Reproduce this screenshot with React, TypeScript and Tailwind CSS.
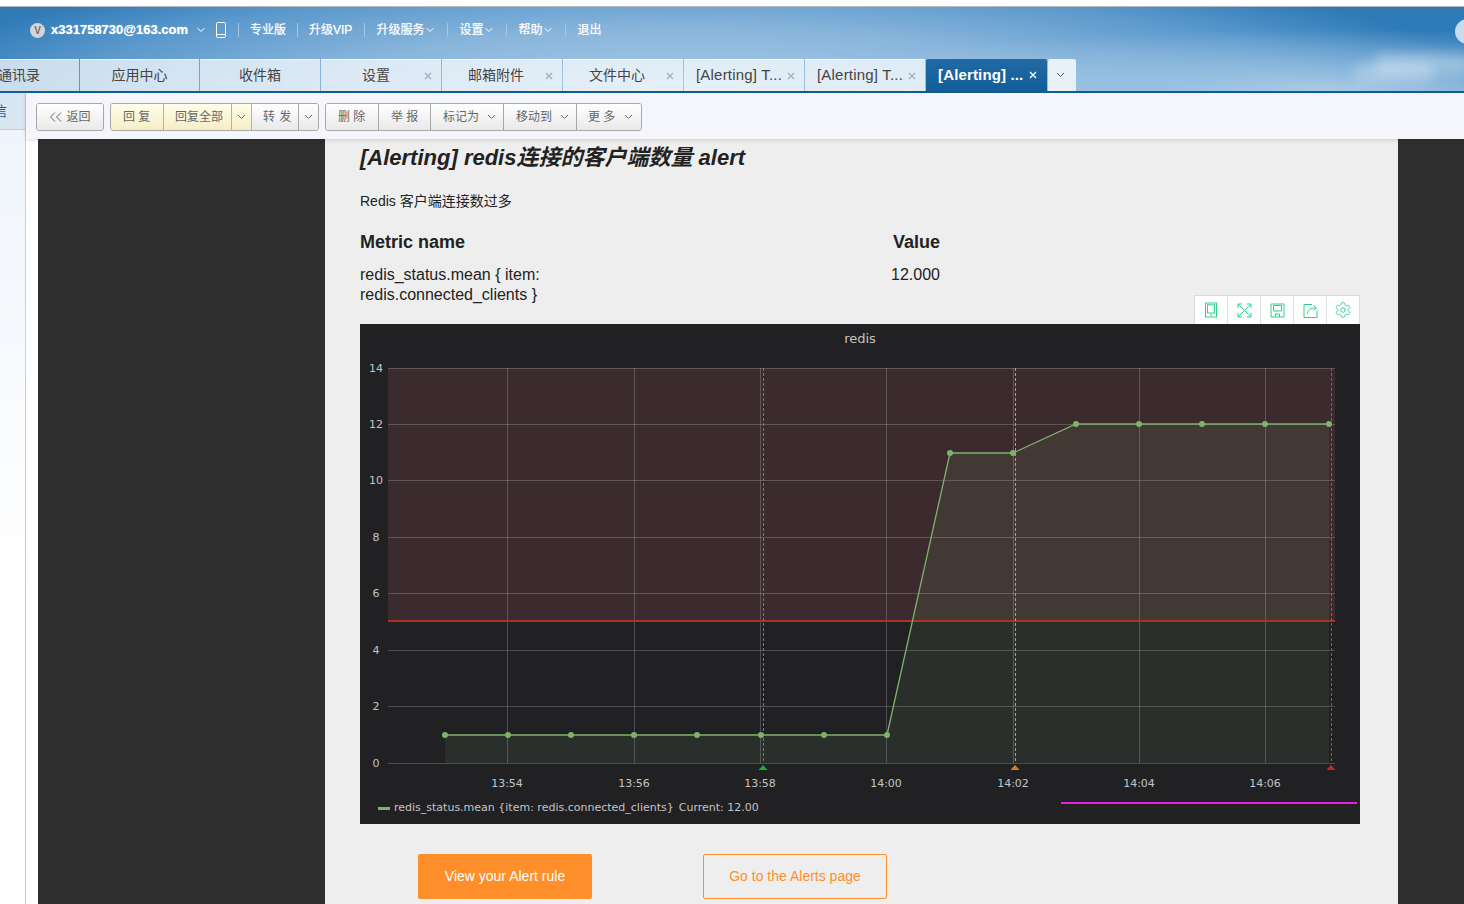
import React from 'react'
import { ChevronDown, Settings } from 'lucide-react'

const navLinks = [
  { label: '专业版' },
  { label: '升级VIP', extra: 'mr-px' },
  { label: '升级服务', menu: true },
  { label: '设置', menu: true },
  { label: '帮助', menu: true },
  { label: '退出' },
]

const tabs = [
  { label: '通讯录', width: 'w-[120px] justify-center text-[14px]' },
  { label: '应用中心', width: 'w-[119px] justify-center text-[14px]' },
  { label: '收件箱', width: 'w-[120px] justify-center text-[14px]' },
  { label: '设置', width: 'w-[120px] pl-[41px] text-[14px]', close: true },
  { label: '邮箱附件', width: 'w-[120px] pl-[26px] text-[14px]', close: true },
  { label: '文件中心', width: 'w-[120px] pl-[26px] text-[14px]', close: true },
  { label: '[Alerting] T...', width: 'w-[120px] pl-[12px] text-[15px] tracking-[0.2px]', close: true },
  { label: '[Alerting] T...', width: 'w-[120px] pl-[12px] text-[15px] tracking-[0.2px]', close: true },
]

const points = [
  [445, 735], [508, 735], [571, 735], [634, 735], [697, 735], [761, 735], [824, 735], [887, 735],
  [950, 453], [1013, 453], [1076, 424], [1139, 424], [1202, 424], [1265, 424], [1329, 424],
]

// y is the grid line, text is centred on it
const yTicks = [
  { label: '14', y: 368.5 }, { label: '12', y: 424.5 }, { label: '10', y: 480.5 }, { label: '8', y: 537.5 },
  { label: '6', y: 593.5 }, { label: '4', y: 650.5 }, { label: '2', y: 706.5 }, { label: '0', y: 763.5 },
]

const xTicks = [
  { label: '13:54', x: 507.5 }, { label: '13:56', x: 634.5 }, { label: '13:58', x: 760.5 }, { label: '14:00', x: 886.5 },
  { label: '14:02', x: 1013.5 }, { label: '14:04', x: 1139.5 }, { label: '14:06', x: 1265.5 },
]

const btn = 'h-full flex items-center border-r border-[#a8a8a8] text-[12px] text-[#666] bg-gradient-to-b from-white to-[#e9e9e9]'
const btnYellow = 'h-full flex items-center border-r border-[#b8b38c] text-[12px] text-[#666] bg-gradient-to-b from-[#fffdea] to-[#f6eec6]'

function Chevron({ className }: { className?: string }) {
  return (
    <svg width="9" height="6" viewBox="0 0 9 6" className={className} fill="none" stroke="currentColor" strokeWidth="1">
      <path d="M1 1l3.5 3.5L8 1" />
    </svg>
  )
}

function TabClose({ active }: { active?: boolean }) {
  return (
    <svg width="8" height="8" viewBox="0 0 8 8" className={active ? 'text-white' : 'text-[#9fb3c8]'} fill="none" stroke="currentColor" strokeWidth="1.4">
      <path d="M1 1l6 6M7 1l-6 6" />
    </svg>
  )
}

function Chart() {
  const line = points.map((p) => p.join(',')).join(' ')
  const area = `445,763 ${line} 1329,763`
  return (
    <svg viewBox="360 354 1000 440" className="block w-[1000px] h-[440px]" fontFamily="'DejaVu Sans', sans-serif">
      <rect x="388" y="368" width="947" height="253" fill="#3b2b2e" />
      <polygon points={area} fill="#7eb26d" fillOpacity="0.1" />
      {yTicks.map((t) => (
        <g key={t.label}>
          <line x1="388" x2="1335" y1={t.y} y2={t.y} stroke="#fff" strokeOpacity="0.2" />
          <text x="376" y={Math.floor(t.y) + 4} fontSize="11" fill="#c4c4c4" textAnchor="middle">{t.label}</text>
        </g>
      ))}
      {xTicks.map((t) => (
        <g key={t.label}>
          <line x1={t.x} x2={t.x} y1="368" y2="763" stroke="#fff" strokeOpacity="0.2" />
          <text x={Math.floor(t.x)} y="787" fontSize="11" fill="#c4c4c4" textAnchor="middle">{t.label}</text>
        </g>
      ))}
      <line x1="388" x2="1335" y1="621" y2="621" stroke="#a93220" strokeWidth="2" />
      <line x1="763.5" x2="763.5" y1="368" y2="763" stroke="#22b14c" strokeDasharray="3 2" />
      <line x1="1015.5" x2="1015.5" y1="368" y2="763" stroke="#e0982f" strokeDasharray="3 2" />
      <line x1="1331.5" x2="1331.5" y1="368" y2="763" stroke="#d0403a" strokeDasharray="3 2" />
      <polygon points="758.5,770 763,765 767.5,770" fill="#12b52f" />
      <polygon points="1010.5,770 1015,765 1019.5,770" fill="#d5801f" />
      <polygon points="1326.5,770 1331,765 1335.5,770" fill="#c4281b" />
      <polyline points={line} fill="none" stroke="#7eb26d" strokeWidth="1.3" />
      {points.map((p) => (
        <circle key={p[0]} cx={p[0]} cy={p[1]} r="3" fill="#7eb26d" />
      ))}
    </svg>
  )
}

const iconClass = 'w-[33px] flex items-center justify-center border-r border-[#e0e0e0] last:border-r-0 last:w-[32px] text-[#2fd08a]'

function GraphIcons() {
  return (
    <div className="ml-auto mt-[-10px] relative w-[166px] h-[29px] flex bg-white border border-b-0 border-[#dcdcdc]">
      <div className={iconClass}>
        <svg width="14" height="16" viewBox="0 0 14 16" fill="none" stroke="currentColor">
          <rect x="1.5" y="1" width="11" height="14" />
          <rect x="3.5" y="2.8" width="7" height="8.2" />
          <path d="M6 13h2" />
        </svg>
      </div>
      <div className={iconClass}>
        <svg width="15" height="15" viewBox="0 0 15 15" fill="none" stroke="currentColor">
          <path d="M1.5 1.5l12 12M13.5 1.5l-12 12M1 5V1h4M10 1h4v4M1 10v4h4M10 14h4v-4" />
        </svg>
      </div>
      <div className={iconClass}>
        <svg width="15" height="15" viewBox="0 0 15 15" fill="none" stroke="currentColor">
          <path d="M1 1h13v13H1zM3.5 2.5h8v5.5h-8zM5.5 14v-3h4v3" />
        </svg>
      </div>
      <div className={iconClass}>
        <svg width="15" height="15" viewBox="0 0 15 15" fill="none" stroke="currentColor">
          <path d="M9 1.5H1v13h13V7.5M4.5 11c0-4 3-6 8-6M10.5 2.5l3 2.5-3 2.5" />
        </svg>
      </div>
      <div className={iconClass}>
        <Settings size={18} strokeWidth={1.2} />
      </div>
    </div>
  )
}

export default function App() {
  return (
    <div className="w-[1464px] h-[904px] overflow-hidden flex flex-col bg-white font-['Liberation_Sans','Noto_Sans_CJK_SC',sans-serif]">
      <div className="h-[7px] shrink-0 bg-white border-b border-[#b9b9b9]" />

      <header className="relative h-[86px] shrink-0 overflow-hidden flex flex-col border-b-2 border-[#115e99] bg-[radial-gradient(ellipse_520px_62px_at_1320px_100%,#a9cbe7_0%,#a9cbe700_100%),radial-gradient(ellipse_800px_135px_at_690px_100%,#a9cbe7_0%,#8ab6dc_45%,#5a98cc_78%,#2f7bb8_100%)]">
        <div className="absolute right-[-10px] top-[46px] w-[100px] h-[20px] rounded-full bg-white/30 blur-[6px]" />
        <div className="absolute right-[30px] top-[56px] w-[80px] h-[18px] rounded-full bg-white/25 blur-[6px]" />
        <div className="absolute right-[-16px] top-[12px] w-[25px] h-[25px] rounded-full bg-[#c8dcec]" />

        <nav className="relative h-[46px] shrink-0 flex items-center pl-[30px] text-white text-[12px] [text-shadow:0_0_1px_rgba(255,255,255,0.7)]">
          <span className="w-[15px] h-[15px] rounded-full bg-[#d5d5d5] text-[#666] text-[10px] font-bold flex items-center justify-center">V</span>
          <span className="ml-[6px] text-[13px] font-bold">x331758730@163.com</span>
          <ChevronDown size={12} strokeWidth={2} className="ml-[7px]" />
          <svg width="12" height="16" viewBox="0 0 12 16" className="ml-[8px]" fill="none" stroke="currentColor">
            <rect x="1.5" y="0.5" width="9" height="15" rx="1" />
            <path d="M1.5 12.5h9" />
          </svg>
          {navLinks.map((link) => (
            <React.Fragment key={link.label}>
              <span className="mx-[11px] w-px h-[14px] bg-[#a5c6e2]" />
              <span className={`flex items-center ${link.extra ?? ''}`}>
                {link.label}
                {link.menu && <ChevronDown size={12} strokeWidth={2} />}
              </span>
            </React.Fragment>
          ))}
        </nav>

        <div className="relative mt-[6px] h-[32px] flex ml-[-41px] items-stretch">
          {tabs.map((tab, i) => (
            <div key={i} className={`${tab.width} mr-px flex items-center bg-white/70 border-t border-white/60 text-[#444]`}>
              <span>{tab.label}</span>
              {tab.close && <span className="ml-auto mr-[9px] flex"><TabClose /></span>}
            </div>
          ))}
          <div className="w-[121px] flex items-center pl-[12px] rounded-t-[2px] bg-gradient-to-b from-[#2069a4] to-[#115e99] text-[15px] font-bold tracking-[0.15px] text-white">
            <span>[Alerting] ...</span>
            <span className="ml-auto mr-[10px] flex"><TabClose active /></span>
          </div>
          <div className="ml-px w-[28px] flex items-center justify-center pr-[4px] rounded-t-[2px] bg-[#e8f0f8] text-[#555]">
            <Chevron />
          </div>
        </div>
      </header>

      <div className="flex-1 flex min-h-0">
        <aside className="w-[26px] shrink-0 border-r border-[#c6ced8] bg-gradient-to-b from-[#eef4fb] to-white to-[60%]">
          <div className="h-[37px] overflow-hidden flex items-center bg-[#d8e6f2] border-b border-[#bcd0e2]">
            <span className="ml-[-7px] text-[14px] text-[#1c5e96]">信</span>
          </div>
        </aside>

        <div className="flex-1 flex flex-col min-w-0">
          <div className="relative z-10 h-[46px] shrink-0 flex items-center pl-[10px] pt-[2px] bg-[#f4f6fb] shadow-[0_1px_4px_rgba(0,0,0,0.15)]">
            <div className="h-[28px] flex overflow-hidden rounded-[3px] border border-[#a8a8a8]">
              <div className={`${btn} w-[66px] justify-center border-r-0`}>
                <svg width="14" height="10" viewBox="0 0 14 10" fill="none" stroke="#666" className="mr-[3px]">
                  <path d="M6 0.5L1.5 5 6 9.5M12 0.5L7.5 5l4.5 4.5" />
                </svg>
                返回
              </div>
            </div>
            <div className="ml-[6px] h-[28px] flex overflow-hidden rounded-[3px] border border-[#a8a8a8]">
              <div className={`${btnYellow} w-[53px] pl-[12px]`}>回&nbsp;复</div>
              <div className={`${btnYellow} w-[68px] pl-[11px]`}>回复全部</div>
              <div className={`${btnYellow} w-[20px] justify-center`}><Chevron /></div>
              <div className={`${btn} w-[47px] pl-[11px] tracking-[0.5px]`}>转&nbsp;发</div>
              <div className={`${btn} w-[19px] justify-center border-r-0`}><Chevron /></div>
            </div>
            <div className="ml-[6px] h-[28px] flex overflow-hidden rounded-[3px] border border-[#a8a8a8]">
              <div className={`${btn} w-[53px] pl-[12px]`}>删&nbsp;除</div>
              <div className={`${btn} w-[52px] pl-[12px]`}>举&nbsp;报</div>
              <div className={`${btn} w-[73px] pl-[12px] gap-[8px]`}>标记为<Chevron /></div>
              <div className={`${btn} w-[73px] pl-[12px] gap-[8px]`}>移动到<Chevron /></div>
              <div className={`${btn} w-[64px] pl-[11px] gap-[9px] border-r-0`}>更&nbsp;多<Chevron /></div>
            </div>
          </div>

          <div className="flex-1 flex min-h-0 pl-[12px]">
            <div className="w-[287px] shrink-0 bg-[#2e2e2e]" />
            <main className="w-[1073px] shrink-0 bg-[#eeeeee] pl-[35px] pr-[38px] text-[#222]">
              <h1 className="pt-[6px] h-[32px] leading-[26px] text-[22px] font-bold italic">[Alerting] redis连接的客户端数量 alert</h1>
              <p className="mt-[20px] h-[20px] leading-[20px] text-[14px]">Redis 客户端连接数过多</p>
              <div className="mt-[20px] flex w-[580px] justify-between text-[18px] font-bold leading-[22px]">
                <span>Metric name</span>
                <span>Value</span>
              </div>
              <div className="mt-[12px] flex w-[580px] justify-between text-[16px] leading-[20px]">
                <div>
                  <div>redis_status.mean {'{'} item:</div>
                  <div>redis.connected_clients {'}'}</div>
                </div>
                <span>12.000</span>
              </div>
              <GraphIcons />
              <section className="relative h-[500px] flex flex-col bg-[#212124]">
                <div className="h-[30px] pt-[7px] text-center text-[13px] leading-[16px] text-[#c4c4c4] font-['DejaVu_Sans',sans-serif]">redis</div>
                <Chart />
                <div className="mt-[7px] pl-[18px] flex items-center text-[11px] leading-[14px] text-[#c4c4c4] font-['DejaVu_Sans',sans-serif]">
                  <span className="w-[12px] h-[3px] bg-[#7eb26d] mr-[4px]" />
                  <span>redis_status.mean {'{'}item: redis.connected_clients{'}'}</span>
                  <span className="ml-[5px]">Current: 12.00</span>
                </div>
                <div className="absolute left-[701px] top-[478px] w-[296px] h-[2px] bg-[#e91fe0]" />
              </section>
              <div className="mt-[30px] pl-[58px] flex gap-[111px]">
                <a className="w-[174px] h-[45px] flex items-center justify-center rounded-[2px] bg-[#ff8f2b] text-white text-[14px]">View your Alert rule</a>
                <a className="w-[184px] h-[45px] flex items-center justify-center rounded-[2px] border border-[#ff8f2b] text-[#ff8f2b] text-[14px]">Go to the Alerts page</a>
              </div>
            </main>
            <div className="flex-1 bg-[#2e2e2e]" />
          </div>
        </div>
      </div>
    </div>
  )
}
